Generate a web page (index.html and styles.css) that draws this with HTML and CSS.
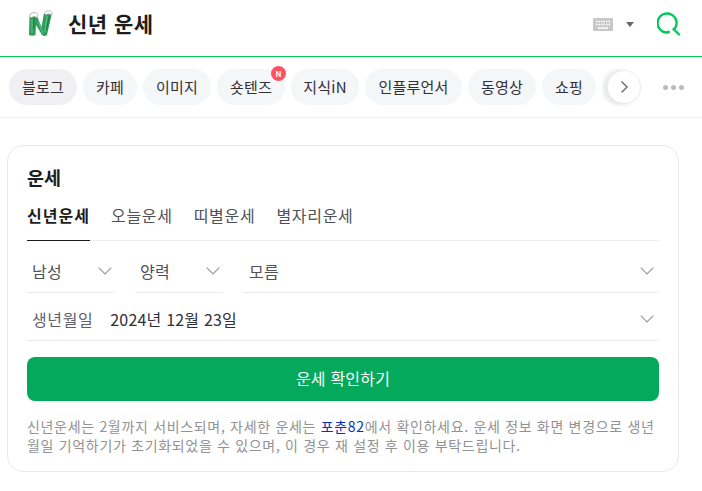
FILE: index.html
```html
<!DOCTYPE html>
<html lang="ko">
<head>
    <meta charset="UTF-8">
    <meta name="viewport" content="width=device-width, initial-scale=1.0">
    <title>신년 운세</title>
    <link rel="stylesheet" href="styles.css">
</head>
<body>
    <header class="header">
        <svg class="logo" width="25" height="27" viewBox="0 0 25 27">
            <path d="M1.500 6 L9 6 L13.500 17 L16 3 L24 3 L19 25 Q16.500 27 14 25 L8 15 L7.500 25 Q4.500 26.500 1 25 Z" fill="#2f9e5c"/>
            <path d="M4 9 L4 23 M10 11 L15 23 M19 6 L17 22" stroke="#5cc07f" stroke-width="1.200" fill="none"/>
            <path d="M6 8 L5.500 20 M21.500 6 L18.500 20" stroke="#1f7f45" stroke-width="1.200" fill="none"/>
            <path d="M1.500 7 Q1.500 3 5 2.500 Q9.500 2 10 6 L9 7.500 Q6 5.500 3.500 7.500 Z" fill="#fff" stroke="#aaa" stroke-width=".8"/>
            <path d="M16.500 3.500 Q17.500 .7 20.500 .7 Q24.500 .7 24 4.500 L22.500 4.500 Q20 3 18 5 Z" fill="#fff" stroke="#aaa" stroke-width=".8"/>
        </svg>
        <h1 class="title">신년 운세</h1>
        <div class="header-tools">
            <svg class="keyboard" width="20" height="13" viewBox="0 0 20 13">
                <rect width="20" height="13" rx="1" fill="#c8c8c8"/>
                <path d="M3 3.500h14M3 6.500h14" stroke="#fff" stroke-width="1.500" stroke-dasharray="1.500 1"/>
                <path d="M5 10h10" stroke="#fff" stroke-width="1.500"/>
            </svg>
            <span class="caret"></span>
            <svg class="search" width="24" height="24" viewBox="0 0 24 24">
                <path d="M10 20.500 A9.500 9.500 0 1 1 17 17.500" fill="none" stroke="#03c75a" stroke-width="2.400" stroke-linecap="round"/>
                <path d="M16.500 17 L22 22.500" stroke="#03c75a" stroke-width="2.400" stroke-linecap="round"/>
                <circle cx="11.500" cy="20" r="1.500" fill="#03c75a"/>
            </svg>
        </div>
    </header>

    <nav class="tabs">
        <div class="chips">
            <a class="chip chip-active">블로그</a>
            <a class="chip">카페</a>
            <a class="chip">이미지</a>
            <a class="chip chip-new">숏텐즈<span class="badge">N</span></a>
            <a class="chip">지식iN</a>
            <a class="chip">인플루언서</a>
            <a class="chip">동영상</a>
            <a class="chip">쇼핑</a>
            <a class="chip chip-cut"></a>
        </div>
        <button class="next">
            <svg width="9" height="14" viewBox="0 0 9 14"><path d="M1.500 1.500 L7 7 L1.500 12.500" fill="none" stroke="#777" stroke-width="1.600"/></svg>
        </button>
        <div class="dots"><i></i><i></i><i></i></div>
    </nav>

    <main class="card">
        <h2 class="card-title">운세</h2>
        <div class="card-tabs">
            <a class="card-tab card-tab-on">신년운세</a>
            <a class="card-tab">오늘운세</a>
            <a class="card-tab">띠별운세</a>
            <a class="card-tab">별자리운세</a>
        </div>
        <div class="selects">
            <div class="select select-sm"><span>남성</span><svg class="arrow" width="14" height="8" viewBox="0 0 14 8"><path d="M.7 .7 L7 7 L13.300 .7" fill="none" stroke="#999" stroke-width="1.200"/></svg></div>
            <div class="select select-sm"><span>양력</span><svg class="arrow" width="14" height="8" viewBox="0 0 14 8"><path d="M.7 .7 L7 7 L13.300 .7" fill="none" stroke="#999" stroke-width="1.200"/></svg></div>
            <div class="select select-wide"><span>모름</span><svg class="arrow" width="14" height="8" viewBox="0 0 14 8"><path d="M.7 .7 L7 7 L13.300 .7" fill="none" stroke="#999" stroke-width="1.200"/></svg></div>
        </div>
        <div class="birth">
            <span class="birth-label">생년월일</span>
            <span class="birth-value">2024년 12월 23일</span>
            <svg class="arrow" width="14" height="8" viewBox="0 0 14 8"><path d="M.7 .7 L7 7 L13.300 .7" fill="none" stroke="#999" stroke-width="1.200"/></svg>
        </div>
        <button class="submit">운세 확인하기</button>
        <p class="note">신년운세는 2월까지 서비스되며, 자세한 운세는 <a href="#">포춘82</a>에서 확인하세요. 운세 정보 화면 변경으로 생년월일 기억하기가 초기화되었을 수 있으며, 이 경우 재 설정 후 이용 부탁드립니다.</p>
    </main>
</body>
</html>
```

FILE: styles.css
```css
* {
    box-sizing: border-box;
}
body {
    margin: 0;
    font-family: "Noto Sans CJK KR", "Noto Sans", sans-serif;
    color: #303038;
    background-color: white;
    overflow: hidden;
}
.header {
    display: flex;
    align-items: center;
    height: 57px;
    padding: 0 21px 8px 28px;
    border-bottom: 1px solid #03c75a;
}
.logo {
    margin: 0 15px 2px 0;
}
.title {
    margin: 0 0 2px;
    font-size: 21px;
    font-weight: 700;
    line-height: 28px;
    color: #1d1d20;
    letter-spacing: 0.5px;
}
.header-tools {
    display: flex;
    align-items: center;
    margin-left: auto;
}
.keyboard {
    margin-right: 13px;
}
.caret {
    width: 0;
    height: 0;
    border-left: 4.500px solid transparent;
    border-right: 4.500px solid transparent;
    border-top: 5px solid #666;
    margin-right: 23px;
}
.tabs {
    display: flex;
    align-items: center;
    position: relative;
    height: 61px;
    padding-left: 9px;
    border-bottom: 1px solid #f0f0f2;
    overflow: hidden;
}
.chips {
    display: flex;
    gap: 6px;
}
.chip {
    position: relative;
    display: flex;
    align-items: center;
    justify-content: center;
    height: 36px;
    width: 68px;
    padding-bottom: 2px;
    border-radius: 18px;
    background-color: #f5f6f8;
    font-size: 15px;
    letter-spacing: 0.2px;
    white-space: nowrap;
}
.chip:nth-child(2) { width: 54px; }
.chip:nth-child(6) { width: 97px; }
.chip:nth-child(7) { width: 68px; }
.chip:nth-child(8) { width: 54px; }
.chip-cut { width: 30px; }
.chip-active {
    background-color: #f0f0f2;
}
.badge {
    position: absolute;
    top: -3px;
    right: -1px;
    width: 15px;
    height: 15px;
    border-radius: 50%;
    background-color: #ff5260;
    color: white;
    font-size: 8px;
    font-weight: 700;
    line-height: 15px;
    text-align: center;
    letter-spacing: 0;
}
.next {
    position: absolute;
    left: 607px;
    top: 13px;
    display: flex;
    align-items: center;
    justify-content: center;
    width: 34px;
    height: 34px;
    padding: 0;
    border: 1px solid #ececec;
    border-radius: 50%;
    background-color: white;
    box-shadow: -2px 1px 4px rgba(0, 0, 0, 0.08);
}
.dots {
    position: absolute;
    left: 663px;
    top: 28px;
    display: flex;
    gap: 3px;
}
.dots i {
    width: 5px;
    height: 5px;
    border-radius: 50%;
    background-color: #bbb;
}
.card {
    width: 672px;
    height: 327px;
    margin: 27px 0 0 7px;
    padding: 18px 19px 0 19px;
    border: 1px solid #e9e9ec;
    border-radius: 16px;
}
.card-title {
    margin: 0;
    height: 28px;
    font-size: 18.500px;
    font-weight: 700;
    line-height: 27px;
    color: #1d1d20;
}
.card-tabs {
    display: flex;
    gap: 21px;
    height: 49px;
    border-bottom: 1px solid #efefef;
}
.card-tab {
    height: 49px;
    padding-top: 11px;
    font-size: 16px;
    letter-spacing: 0.7px;
    color: #505058;
}
.card-tab-on {
    width: 63px;
    color: #1d1d20;
    font-weight: 700;
    letter-spacing: 1px;
    white-space: nowrap;
    border-bottom: 1px solid #1d1d20;
}
.selects {
    display: flex;
    gap: 20px;
}
.select {
    display: flex;
    align-items: center;
    justify-content: space-between;
    height: 52px;
    padding: 8px 3px 0 5px;
    border-bottom: 1px solid #e9e9ec;
    font-size: 16px;
    letter-spacing: 0.4px;
    color: #505058;
}
.select-sm {
    width: 88px;
}
.select-wide {
    flex: 1;
    padding-left: 6px;
    padding-right: 5px;
}
.birth {
    display: flex;
    align-items: center;
    height: 48px;
    padding: 4px 5px 0;
    border-bottom: 1px solid #e9e9ec;
    font-size: 16px;
}
.birth-label {
    color: #606068;
    margin-right: 17px;
    letter-spacing: 0.6px;
}
.birth-value {
    color: #303038;
    letter-spacing: 0.2px;
}
.birth .arrow {
    margin-left: auto;
}
.submit {
    display: block;
    width: 100%;
    height: 44px;
    margin-top: 16px;
    padding: 0 0 3px;
    border: none;
    border-radius: 8px;
    background-color: #05a95c;
    color: white;
    font-family: inherit;
    font-size: 16px;
    letter-spacing: 0.2px;
}
.note {
    margin: 16px 0 0;
    font-size: 14px;
    line-height: 19px;
    letter-spacing: 0.68px;
    word-break: break-all;
    color: #929294;
}
.note a {
    color: #0b2fb8;
    text-decoration: none;
}
```
